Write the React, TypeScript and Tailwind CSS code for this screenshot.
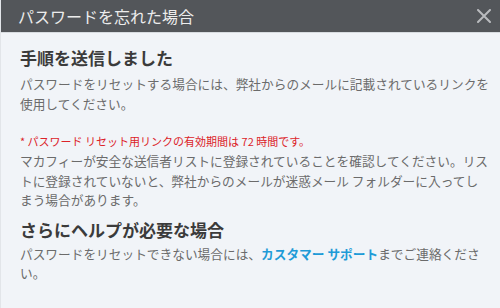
const App = () => {
  return (
    <div
      className="w-[500px] h-[308px] bg-[#f1f4f8] overflow-hidden border-l border-[#e2e5e9]"
      style={{ fontFamily: '"Noto Sans CJK JP", "Noto Sans", sans-serif' }}
    >
      <div className="flex items-center justify-between h-[33px] bg-[#53565a] pl-[17px] pr-[8px] border-b border-[#d8dce0]">
        <h1 className="text-[16px] text-[#ececec] leading-none">パスワードを忘れた場合</h1>
        <svg width="14" height="14" viewBox="0 0 14 14" className="mr-[1px]">
          <path d="M1 1 L13 13 M13 1 L1 13" stroke="#b9bbbe" strokeWidth="2" strokeLinecap="round" />
        </svg>
      </div>

      <div className="pl-[19px] pt-[13px] text-[12.7px] leading-[19.5px] text-[#6b6b6b]">
        <h2 className="text-[17px] leading-[24px] font-bold text-[#3b3b3b]">手順を送信しました</h2>
        <p className="mt-[4px] whitespace-nowrap">
          パスワードをリセットする場合には、弊社からのメールに記載されているリンクを
          <br />
          使用してください。
        </p>

        <p className="mt-[20px] text-[11px] leading-[16px] text-[#dc2329]">
          * パスワード リセット用リンクの有効期間は 72 時間です。
        </p>
        <p className="mt-[2px] whitespace-nowrap">
          マカフィーが安全な送信者リストに登録されていることを確認してください。リス
          <br />
          トに登録されていないと、弊社からのメールが迷惑メール フォルダーに入ってし
          <br />
          まう場合があります。
        </p>

        <h2 className="mt-[8px] text-[17px] leading-[24px] font-bold text-[#3b3b3b]">さらにヘルプが必要な場合</h2>
        <p className="mt-[2px] whitespace-nowrap">
          パスワードをリセットできない場合には、
          <span className="font-bold text-[#1e9bd7]">カスタマー サポート</span>
          までご連絡くださ
          <br />
          い。
        </p>
      </div>
    </div>
  );
};

export default App;
